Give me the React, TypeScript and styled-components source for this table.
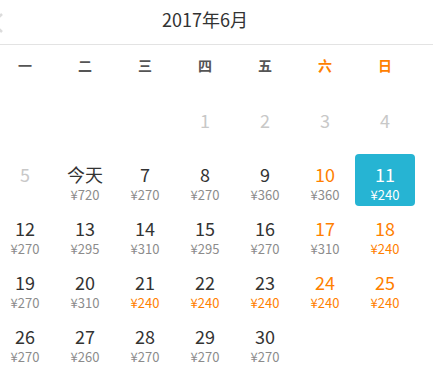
import React from 'react';
import styled, { createGlobalStyle } from 'styled-components';

const GlobalStyle = createGlobalStyle`
  html, body {
    margin: 0;
    padding: 0;
    background: #fff;
    overflow: hidden;
  }
  body {
    width: 433px;
    height: 390px;
    font-family: "Noto Sans CJK SC", "Noto Sans", sans-serif;
  }
`;

type Day = {
  label: string;
  price?: number;
  disabled?: boolean;
  selected?: boolean;
};

const WEEKDAYS = ['一', '二', '三', '四', '五', '六', '日'];
const LOWEST = 240;

const prices: Record<number, number> = {
  6: 720, 7: 270, 8: 270, 9: 360, 10: 360, 11: 240,
  12: 270, 13: 295, 14: 310, 15: 295, 16: 270, 17: 310, 18: 240,
  19: 270, 20: 310, 21: 240, 22: 240, 23: 240, 24: 240, 25: 240,
  26: 270, 27: 260, 28: 270, 29: 270, 30: 270,
};

const buildDays = (): (Day | null)[] => {
  const cells: (Day | null)[] = [null, null, null];
  for (let d = 1; d <= 30; d++) {
    cells.push({
      label: d === 6 ? '今天' : String(d),
      price: prices[d],
      disabled: d < 6,
      selected: d === 11,
    });
  }
  return cells;
};

const Calendar = () => {
  const days = buildDays();

  return (
    <Page>
      <GlobalStyle />
      <Header>
        <Back>
          <svg width="14" height="20" viewBox="0 0 14 20">
            <path d="M12 1 L3 10 L12 19" fill="none" stroke="#dcdcdc" strokeWidth="2.6" />
          </svg>
        </Back>
        <Title>2017年6月</Title>
        <span />
      </Header>
      <Body>
        <WeekRow>
          {WEEKDAYS.map((w, i) => (
            <WeekLabel key={w} weekend={i > 4}>{w}</WeekLabel>
          ))}
        </WeekRow>
        <Grid>
          {days.map((day, i) => {
            if (!day) return <Cell key={`e${i}`} />;
            const weekend = i % 7 > 4;
            return (
              <Cell key={day.label}>
                <DayBox selected={day.selected}>
                  <Num disabled={day.disabled} weekend={weekend} selected={day.selected}>
                    {day.label}
                  </Num>
                  {day.price && (
                    <Price low={day.price === LOWEST} selected={day.selected}>
                      ¥{day.price}
                    </Price>
                  )}
                </DayBox>
              </Cell>
            );
          })}
        </Grid>
      </Body>
    </Page>
  );
};

const Page = styled.div`
  width: 433px;
  height: 390px;
  overflow: hidden;
`;

const Header = styled.div`
  display: grid;
  grid-template-columns: 60px 1fr 60px;
  align-items: center;
  width: 420px;
  margin-left: -5px;
  height: 44px;
  position: relative;
  &::after {
    content: '';
    position: absolute;
    left: 5px;
    bottom: -1px;
    width: 433px;
    height: 1px;
    background: #e3e3e3;
  }
`;

const Back = styled.div`
  display: flex;
  align-items: center;
  margin-left: -5px;
  margin-top: 1px;
`;

const Title = styled.div`
  text-align: center;
  font-size: 18px;
  color: #333;
  line-height: 24px;
  margin-top: -6px;
`;

const Body = styled.div`
  width: 420px;
  margin-left: -5px;
  margin-top: 1px;
`;

const WeekRow = styled.div`
  display: grid;
  grid-template-columns: repeat(7, 60px);
  height: 40px;
  align-items: center;
  margin-bottom: 14px;
`;

const WeekLabel = styled.div<{ weekend?: boolean }>`
  text-align: center;
  font-size: 14px;
  font-weight: bold;
  color: ${p => (p.weekend ? '#ff8000' : '#555')};
`;

const Grid = styled.div`
  display: grid;
  grid-template-columns: repeat(7, 60px);
  grid-auto-rows: 54px;
`;

const Cell = styled.div`
  padding: 1px 0;
  display: flex;
`;

const DayBox = styled.div<{ selected?: boolean }>`
  flex: 1;
  display: flex;
  flex-direction: column;
  align-items: center;
  padding-top: 9px;
  border-radius: 4px;
  background: ${p => (p.selected ? '#26b4d3' : 'transparent')};
`;

const Num = styled.div<{ disabled?: boolean; weekend?: boolean; selected?: boolean }>`
  font-size: 18px;
  line-height: 22px;
  color: ${p =>
    p.selected ? '#fff' : p.disabled ? '#c8c8c8' : p.weekend ? '#ff8000' : '#333'};
`;

const Price = styled.div<{ low?: boolean; selected?: boolean }>`
  font-size: 13px;
  line-height: 20px;
  color: ${p => (p.selected ? '#fff' : p.low ? '#ff8000' : '#8c8c8c')};
`;

const App = () => <Calendar />;

export default App;
